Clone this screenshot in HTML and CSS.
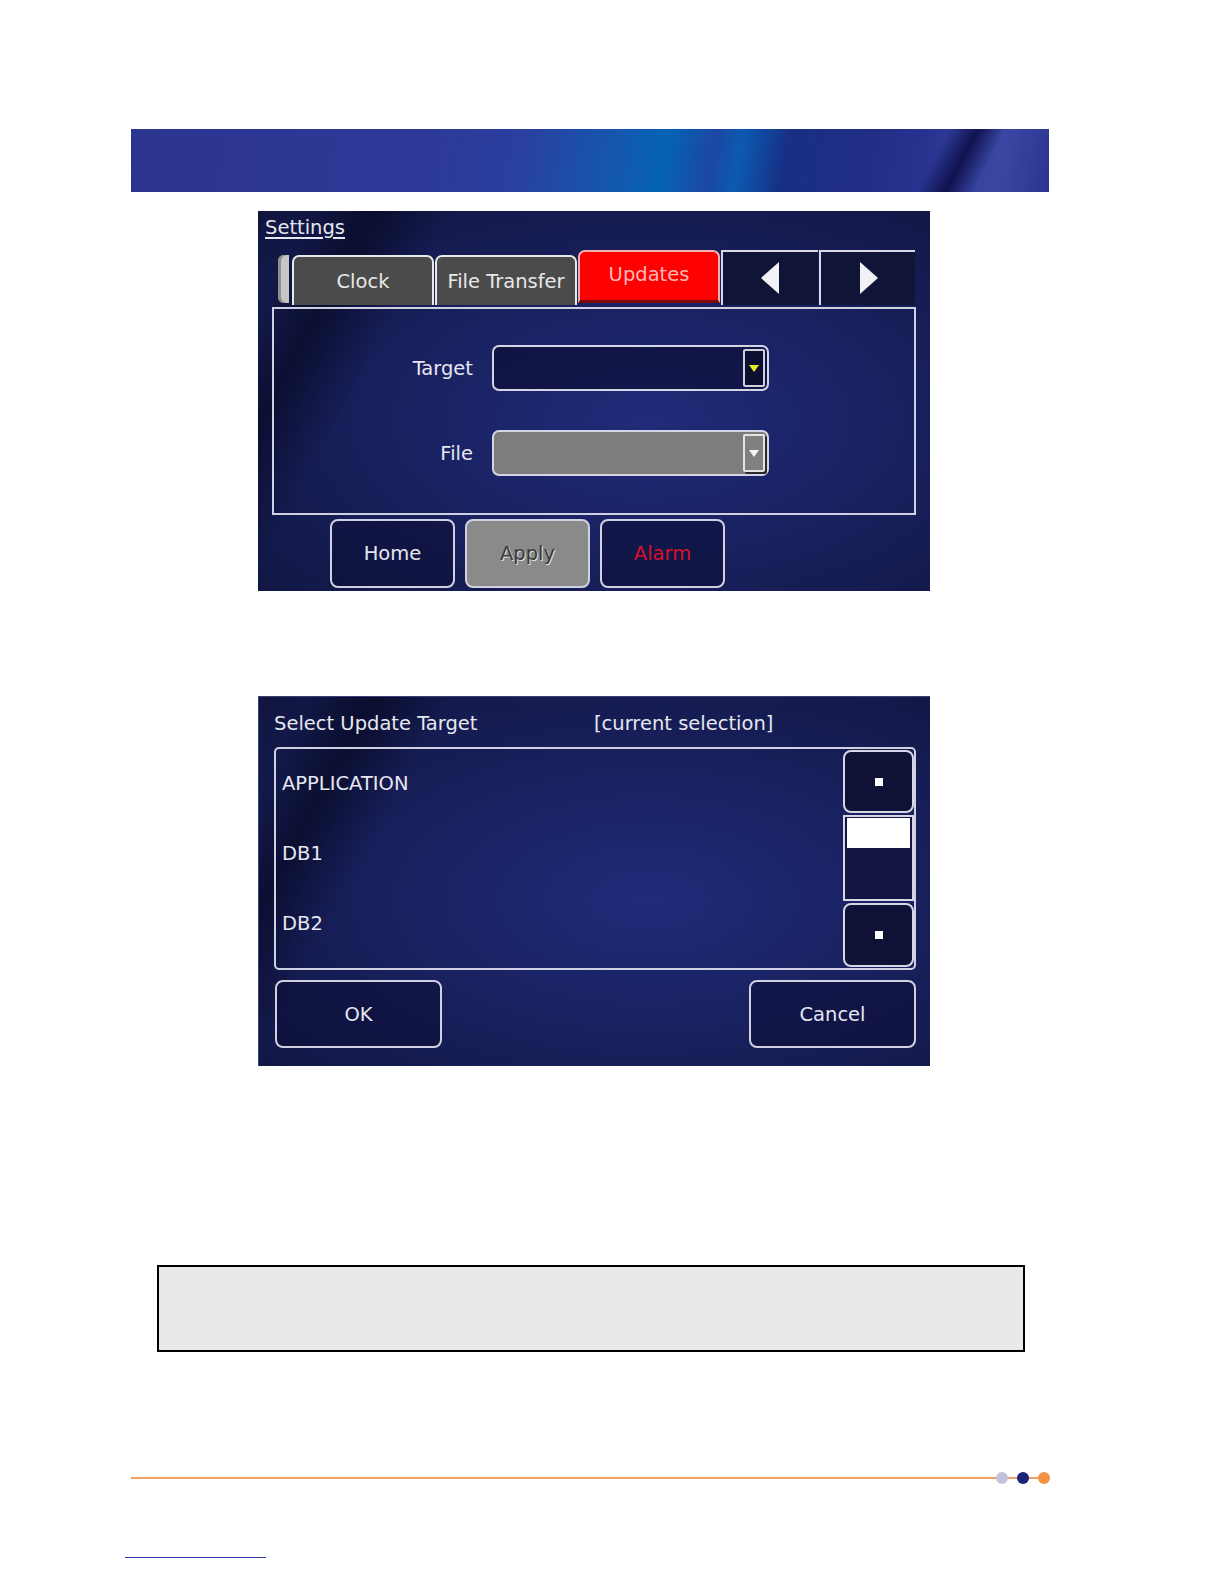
FILE: index.html
```html
<!DOCTYPE html>
<html>
<head>
<meta charset="utf-8">
<link rel="stylesheet" href="styles.css">
</head>
<body>
<div class="page">
  <div class="banner"></div>

  <div class="shot shot1">
    <div class="title"><span class="title-link">Settings</span></div>
    <div class="tabs">
      <div class="notch"></div>
      <div class="tab">Clock</div>
      <div class="tab">File Transfer</div>
      <div class="tab active">Updates</div>
      <div class="tab nav">
        <svg width="20" height="32" viewBox="0 0 20 32"><polygon points="18,0 18,32 0,16" fill="#f2f2f6"/></svg>
      </div>
      <div class="tab nav">
        <svg width="20" height="32" viewBox="0 0 20 32"><polygon points="2,0 2,32 20,16" fill="#f2f2f6"/></svg>
      </div>
    </div>
    <div class="panel">
      <div class="row">
        <div class="label">Target</div>
        <div class="dd">
          <div class="ddbtn">
            <svg width="10" height="7" viewBox="0 0 10 7"><polygon points="0,0 10,0 5,7" fill="#e4ef1c"/></svg>
          </div>
        </div>
      </div>
      <div class="row">
        <div class="label">File</div>
        <div class="dd disabled">
          <div class="ddbtn">
            <svg width="10" height="7" viewBox="0 0 10 7"><polygon points="0,0 10,0 5,7" fill="#f4f4f4"/></svg>
          </div>
        </div>
      </div>
    </div>
    <div class="actions">
      <div class="btn">Home</div>
      <div class="btn apply">Apply</div>
      <div class="btn alarm">Alarm</div>
    </div>
  </div>

  <div class="shot shot2">
    <div class="dlg-title">
      <span class="t1">Select Update Target</span>
      <span class="t2">[current selection]</span>
    </div>
    <div class="listbox">
      <div class="items">
        <div class="item">APPLICATION</div>
        <div class="item">DB1</div>
        <div class="item">DB2</div>
      </div>
      <div class="scroll">
        <div class="sbtn"><span class="dot"></span></div>
        <div class="track"><div class="thumb"></div></div>
        <div class="sbtn down"><span class="dot"></span></div>
      </div>
    </div>
    <div class="dlg-actions">
      <div class="btn wide">OK</div>
      <div class="btn wide">Cancel</div>
    </div>
  </div>

  <div class="note"></div>

  <div class="footer">
    <div class="fline"></div>
    <span class="fdot d1"></span>
    <span class="fdot d2"></span>
    <span class="fdot d3"></span>
  </div>

  <div class="bline"></div>
</div>
</body>
</html>
```

FILE: styles.css
```css
html, body {
  margin: 0;
  padding: 0;
  background: #ffffff;
}

.page {
  width: 1224px;
  padding-top: 1px;
  font-family: "DejaVu Sans", "Liberation Sans", sans-serif;
}

.banner {
  margin: 128px 0 0 131px;
  width: 918px;
  height: 63px;
  background:
    linear-gradient(118deg, rgba(10,10,60,0) 0%, rgba(10,10,60,0) 86%, rgba(8,8,60,0.8) 89%, rgba(10,10,60,0) 92%, rgba(10,10,60,0) 100%),
    linear-gradient(100deg, #2b3590 0%, #2e3896 30%, #2a3f9e 42%, #1656ad 52%, #0563b6 58%, #1b47a2 63%, #0c5ab2 66%, #172f84 71%, #222d88 80%, #27338f 86%, #3a48a4 94%, #2b3590 100%);
}

/* ---------- shared screenshot look ---------- */
.shot {
  margin-left: 258px;
  width: 672px;
  box-sizing: border-box;
  color: #e6e6f0;
  font-size: 19.5px;
  background:
    linear-gradient(118deg, rgba(4,6,28,0) 0%, rgba(4,6,28,0) 6%, rgba(4,6,28,0.6) 13%, rgba(4,6,28,0) 22%, rgba(4,6,28,0) 100%),
    radial-gradient(ellipse at 58% 55%, #202b7a 0%, #19215f 45%, #10153f 100%);
}

.shot1 {
  margin-top: 19px;
  height: 380px;
  padding-top: 5px;
}

.title {
  height: 24px;
  line-height: 24px;
  padding-left: 7px;
}

.title-link {
  text-decoration: underline;
  text-underline-offset: 3px;
  text-decoration-thickness: 1.5px;
}

/* tabs */
.tabs {
  display: flex;
  margin: 10px 0 0 20px;
  height: 55px;
}

.notch {
  width: 11px;
  height: 48px;
  margin-top: 5px;
  margin-right: 3px;
  background: #c6c6c6;
  border-radius: 6px 0 0 6px;
  box-shadow: inset 3px 0 0 #8e8e8e;
}

.tab {
  box-sizing: border-box;
  width: 142px;
  height: 50px;
  margin-top: 5px;
  margin-right: 1px;
  background: #4b4b4b;
  border: 2px solid #e8e8e8;
  border-bottom: none;
  border-radius: 7px 7px 0 0;
  display: flex;
  align-items: center;
  justify-content: center;
  color: #e8e8e8;
}

.tab.active {
  margin-top: 0;
  height: 53px;
  background: #ff0000;
  border-color: #f6b0b0;
  color: #ffb8b8;
  padding-bottom: 4px;
  border-bottom: 3px solid #7a0a0a;
}

.tab.nav {
  width: 97px;
  height: 55px;
  margin-top: 0;
  margin-right: 1px;
  background: #101437;
  border: none;
  border-top: 2px solid #d8d8e6;
  border-left: 2px solid #d8d8e6;
  border-radius: 0;
  padding-bottom: 2px;
}

.tab.nav:last-child {
  width: 96px;
}

/* settings panel */
.panel {
  box-sizing: border-box;
  margin: 2px 0 0 14px;
  width: 644px;
  height: 208px;
  border: 2px solid #cfd0e2;
  padding-top: 36px;
  display: flex;
  flex-direction: column;
  gap: 39px;
}

.row {
  display: flex;
  align-items: center;
  height: 46px;
}

.label {
  width: 199px;
  text-align: right;
  margin-right: 19px;
}

.dd {
  box-sizing: border-box;
  width: 277px;
  height: 46px;
  border: 2px solid #d4d4e4;
  border-radius: 7px;
  background: rgba(8, 10, 40, 0.55);
  display: flex;
  justify-content: flex-end;
  align-items: center;
  padding-right: 2px;
}

.ddbtn {
  box-sizing: border-box;
  width: 22px;
  height: 38px;
  border: 2px solid #cfcfe0;
  border-radius: 2px;
  background: #0c0f30;
  display: flex;
  align-items: center;
  justify-content: center;
}

.dd.disabled {
  background: #7d7d7d;
}

.dd.disabled .ddbtn {
  background: #808080;
  border-color: #e4e4e4;
  box-shadow: 2px 2px 0 #2a2a2a;
}

/* bottom buttons */
.actions {
  display: flex;
  gap: 10px;
  margin: 4px 0 0 72px;
}

.btn {
  box-sizing: border-box;
  width: 125px;
  height: 69px;
  border: 2px solid #d0d0e0;
  border-radius: 8px;
  background: rgba(10, 12, 50, 0.5);
  display: flex;
  align-items: center;
  justify-content: center;
  color: #e6e6f0;
}

.btn.apply {
  background: #8a8a8a;
  color: #3a3a3a;
  text-shadow: 1px 1px 0 #e0e0e0;
}

.btn.alarm {
  color: #d8102c;
}

/* ---------- dialog ---------- */
.shot2 {
  margin-top: 105px;
  height: 370px;
  padding: 15px 0 0 15px;
  border-top: 1px solid #3b4078;
  border-left: 1px solid #3b4078;
}

.dlg-title {
  height: 24px;
  line-height: 24px;
  display: flex;
}

.t1 {
  width: 320px;
}

.listbox {
  box-sizing: border-box;
  margin-top: 11px;
  width: 642px;
  height: 223px;
  border: 2px solid #cfd0e2;
  border-radius: 5px;
  display: flex;
}

.items {
  flex: 1;
  padding-left: 6px;
}

.item {
  height: 70px;
  line-height: 70px;
}

.scroll {
  width: 71px;
  display: flex;
  flex-direction: column;
  gap: 2px;
  padding-top: 1px;
}

.sbtn {
  box-sizing: border-box;
  height: 63px;
  border: 2px solid #d6d6e6;
  border-radius: 8px;
  background: #0f1236;
  display: flex;
  align-items: center;
  justify-content: center;
}

.sbtn.down {
  height: 64px;
}

.dot {
  width: 8px;
  height: 8px;
  background: #ffffff;
}

.track {
  box-sizing: border-box;
  height: 86px;
  border: 2px solid #d6d6e6;
  background: #121640;
  padding: 1px 2px;
}

.thumb {
  height: 30px;
  background: #ffffff;
}

.dlg-actions {
  display: flex;
  justify-content: space-between;
  margin-top: 10px;
  width: 641px;
  padding-left: 1px;
}

.btn.wide {
  width: 167px;
  height: 68px;
}

/* ---------- note box ---------- */
.note {
  box-sizing: border-box;
  margin: 199px 0 0 157px;
  width: 868px;
  height: 87px;
  border: 2px solid #000000;
  background: #e9e9e9;
}

/* ---------- footer ---------- */
.footer {
  position: relative;
  margin: 120px 0 0 131px;
  width: 920px;
  height: 12px;
}

.fline {
  position: absolute;
  left: 0;
  top: 5px;
  width: 912px;
  height: 2px;
  background: #f0a062;
}

.fdot {
  position: absolute;
  top: 0;
  width: 12px;
  height: 12px;
  border-radius: 50%;
}

.d1 { left: 865px; background: #c2c2dc; }
.d2 { left: 886px; background: #1b237a; }
.d3 { left: 907px; background: #f29242; }

.bline {
  margin: 73px 0 0 125px;
  width: 141px;
  height: 1px;
  background: #2a3aa8;
}
```
